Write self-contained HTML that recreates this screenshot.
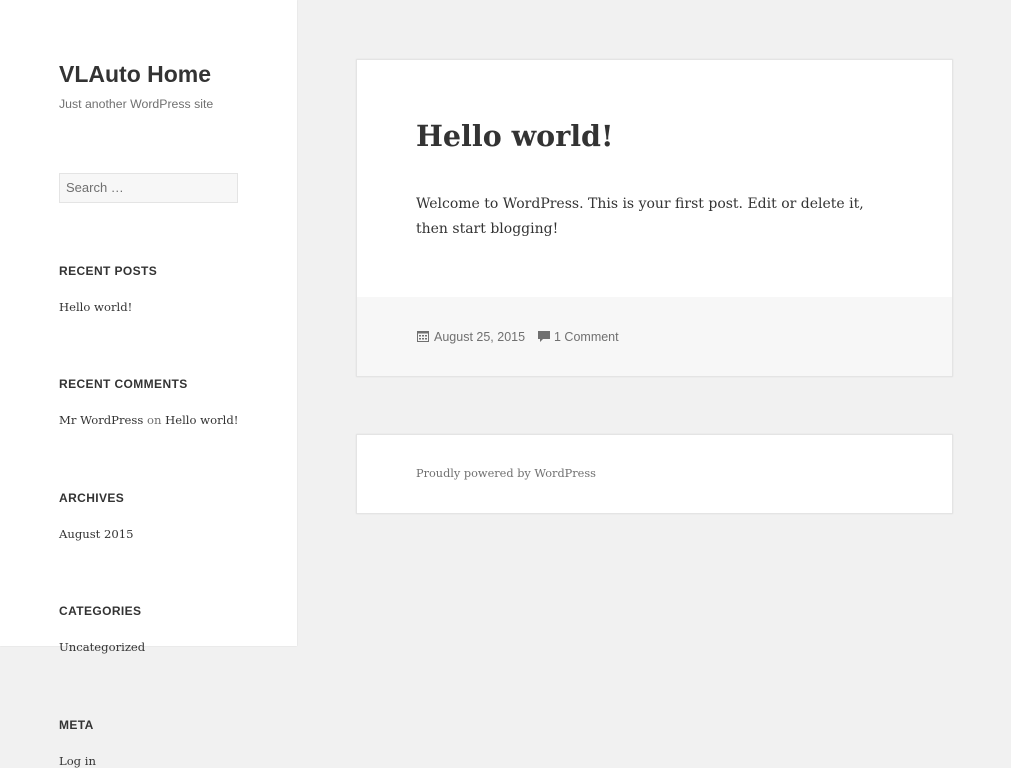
<!DOCTYPE html>
<html><head><meta charset="utf-8"><style>
*{margin:0;padding:0;box-sizing:border-box}
body{width:1024px;height:768px;overflow:hidden;background:#fff;position:relative;font-family:"Liberation Sans",sans-serif;color:#333}
.bg{position:absolute;left:0;top:0;width:1011px;height:768px;background:#f1f1f1}
.side{position:absolute;left:0;top:0;width:297px;height:646px;background:#fff;box-shadow:0 0 1px rgba(0,0,0,.15)}
.abs{position:absolute;white-space:nowrap}
.serif{font-family:"DejaVu Serif","Liberation Serif",serif}
.wt{font-size:12px;font-weight:bold;letter-spacing:0.4px;color:#333}
.wl{font-size:11.6px;color:#333}
.card{position:absolute;left:356px;background:#fff;width:597px;border:1px solid #e4e4e4;border-width:0 1px 1px 1px;box-shadow:0 0 1px rgba(0,0,0,.1)}
</style></head><body>
<div class="bg"></div>
<div class="side"></div>
<div class="abs" style="left:59px;top:61px;font-size:23px;font-weight:bold;color:#333">VLAuto Home</div>
<div class="abs" style="left:59px;top:97px;font-size:12.3px;color:#707070">Just another WordPress site</div>
<div class="abs" style="left:59px;top:173px;width:179px;height:30px;background:#f7f7f7;border:1px solid #e4e4e4;font-size:13px;color:#707070;padding:6px 6px">Search …</div>
<div class="abs wt" style="left:59px;top:264px">RECENT POSTS</div>
<div class="abs wl serif" style="left:59px;top:300px">Hello world!</div>
<div class="abs wt" style="left:59px;top:377px">RECENT COMMENTS</div>
<div class="abs wl serif" style="left:59px;top:413px">Mr WordPress <span style="color:#707070">on</span> Hello world!</div>
<div class="abs wt" style="left:59px;top:491px">ARCHIVES</div>
<div class="abs wl serif" style="left:59px;top:527px">August 2015</div>
<div class="abs wt" style="left:59px;top:604px">CATEGORIES</div>
<div class="abs wl serif" style="left:59px;top:640px">Uncategorized</div>
<div class="abs wt" style="left:59px;top:718px">META</div>
<div class="abs wl serif" style="left:59px;top:754px">Log in</div>

<div class="card" style="top:59px;height:318px;border-top:1px solid #e4e4e4">
  <div style="position:absolute;left:0;right:0;bottom:0;height:79px;background:#f7f7f7"></div>
</div>
<div class="abs serif" style="left:416px;top:119px;font-size:28.5px;font-weight:bold;color:#333">Hello world!</div>
<div class="abs serif" style="left:416px;top:192px;font-size:14px;line-height:24.5px;color:#333;white-space:normal;width:470px">Welcome to WordPress. This is your first post. Edit or delete it, then start blogging!</div>
<svg class="abs" style="left:417px;top:330px" width="12" height="12" viewBox="0 0 12 12"><rect x="0.5" y="1.5" width="11" height="10" fill="none" stroke="#707070"/><rect x="0.5" y="1.5" width="11" height="2" fill="#707070"/><g fill="#707070"><rect x="2" y="5" width="2" height="1.5"/><rect x="5" y="5" width="2" height="1.5"/><rect x="8" y="5" width="2" height="1.5"/><rect x="2" y="8" width="2" height="1.5"/><rect x="5" y="8" width="2" height="1.5"/><rect x="8" y="8" width="2" height="1.5"/></g></svg>
<div class="abs" style="left:434px;top:330px;font-size:12.5px;color:#707070">August 25, 2015</div>
<svg class="abs" style="left:537px;top:331px" width="14" height="12" viewBox="0 0 14 12"><path d="M1 0H13V8H6L3 11V8H1Z" fill="#707070"/></svg>
<div class="abs" style="left:554px;top:330px;font-size:12.5px;color:#707070">1 Comment</div>

<div class="card" style="top:434px;height:80px;border-top:1px solid #e4e4e4"></div>
<div class="abs serif" style="left:416px;top:467px;font-size:11.3px;color:#707070">Proudly powered by WordPress</div>
</body></html>
